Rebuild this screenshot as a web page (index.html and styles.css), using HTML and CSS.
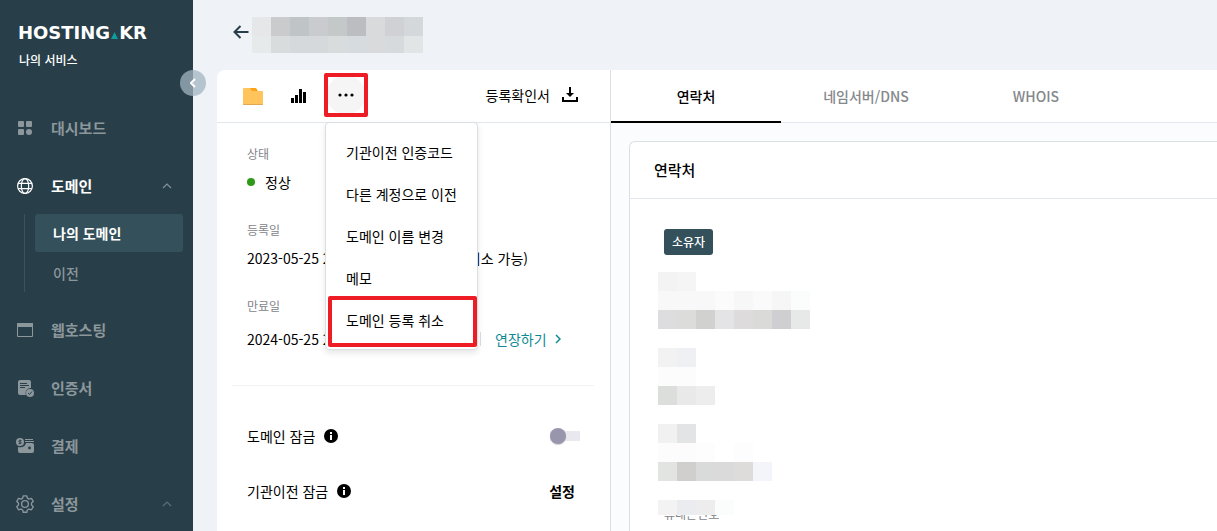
FILE: index.html
```html
<!DOCTYPE html>
<html lang="ko">
<head>
  <meta charset="UTF-8" />
  <meta name="viewport" content="width=device-width, initial-scale=1.0" />
  <title>HOSTING.KR 나의 서비스</title>
  <link rel="stylesheet" href="styles.css">
</head>
<body>
  <div class="app">

    <!-- Sidebar -->
    <aside class="sidebar">
      <a class="logo" href="#">HOSTING<svg class="logo-mark" width="7" height="7" viewBox="0 0 7 7"><path d="M3.5 0L7 7H0z" fill="#0f9c9c"/></svg>KR</a>
      <p class="service">나의 서비스</p>
      <button class="collapse" type="button" aria-label="메뉴 접기">
        <svg width="6" height="10" viewBox="0 0 6 10" fill="none" stroke="#fff" stroke-width="2"><path d="M5 1L1 5l4 4"/></svg>
      </button>

      <nav class="menu">
        <a class="menu-item" href="#">
          <svg width="18" height="18" viewBox="0 0 18 18" fill="currentColor"><rect x="2" y="2" width="6" height="6" rx="1"/><rect x="10" y="2" width="6" height="6" rx="1"/><rect x="2" y="10" width="6" height="6" rx="1"/><circle cx="13" cy="13" r="3"/></svg>
          <span>대시보드</span>
        </a>
        <a class="menu-item current" href="#">
          <svg width="18" height="18" viewBox="0 0 18 18" fill="none" stroke="currentColor" stroke-width="1.2"><circle cx="9" cy="9" r="7.4"/><ellipse cx="9" cy="9" rx="3.7" ry="7.4"/><path d="M2.2 6.3h13.6M2.2 11.7h13.6"/></svg>
          <span>도메인</span>
          <svg class="arrow" width="10" height="6" viewBox="0 0 10 6" fill="none" stroke="currentColor" stroke-width="1.2"><path d="M1 5l4-4 4 4"/></svg>
        </a>
        <div class="submenu">
          <a class="submenu-item selected" href="#">나의 도메인</a>
          <a class="submenu-item" href="#">이전</a>
        </div>
        <a class="menu-item" href="#">
          <svg width="18" height="18" viewBox="0 0 18 18"><path d="M1.5 2.5h15v13h-15z" fill="none" stroke="currentColor"/><path d="M1 2h16v4H1z" fill="currentColor"/></svg>
          <span>웹호스팅</span>
        </a>
        <a class="menu-item" href="#">
          <svg width="18" height="18" viewBox="0 0 18 18"><path d="M4 1h9a2 2 0 0 1 2 2v6a5 5 0 0 0-5 7H4a2 2 0 0 1-2-2V3a2 2 0 0 1 2-2z" fill="currentColor"/><path d="M4 4.5h7M4 6.5h9M4 8.5h5" stroke="#283e48"/><circle cx="14" cy="14" r="4" fill="currentColor"/><path d="M12 14l1.5 1.5 2.5-3" stroke="#283e48" fill="none"/></svg>
          <span>인증서</span>
        </a>
        <a class="menu-item" href="#">
          <svg width="18" height="18" viewBox="0 0 18 18"><path d="M9 4.5h9M9 2.5h8" stroke="currentColor"/><path d="M2 10c4 1 7 0 8-4h6a2 2 0 0 1 2 2v6a2 2 0 0 1-2 2H4a2 2 0 0 1-2-2z" fill="currentColor"/><circle cx="4" cy="5" r="4" fill="currentColor"/><path d="M5.5 3.5h-2a.7.7 0 0 0 0 1.5h1a.7.7 0 0 1 0 1.5h-2M4 2.5v5" stroke="#283e48" fill="none" stroke-width=".8"/><circle cx="13.5" cy="11" r="1.4" fill="#283e48"/></svg>
          <span>결제</span>
        </a>
        <a class="menu-item" href="#">
          <svg width="18" height="18" viewBox="0 0 24 24" fill="none" stroke="currentColor" stroke-width="1.8"><path d="M9.6 1.2h4.8l.7 3 2.3 1.3 3.2-1 2.4 4.2-2.3 2v2.6l2.3 2.2-2.4 4.2-3.2-1-2.3 1.3-.7 3H9.6l-.7-3-2.3-1.3-3.2 1L1 15.500l2.300-2.200v-2.600L1 8.700l2.400-4.200 3.200 1 2.300-1.300z" stroke-linejoin="round"/><circle cx="12" cy="12" r="4.5"/></svg>
          <span>설정</span>
          <svg class="arrow dim" width="10" height="6" viewBox="0 0 10 6" fill="none" stroke="currentColor" stroke-width="1.2"><path d="M1 5l4-4 4 4"/></svg>
        </a>
      </nav>
    </aside>

    <main class="content">
      <!-- Domain title -->
      <header class="title-bar">
        <button class="back" type="button" aria-label="뒤로">
          <svg width="16" height="14" viewBox="0 0 16 14" fill="none" stroke="#283e48" stroke-width="2"><path d="M15.500 7H1.500M7.500 1l-6 6 6 6"/></svg>
        </button>
        <svg class="mosaic" width="171" height="36" viewBox="0 0 171 36" shape-rendering="crispEdges">
          <path fill="#e5e7e9" d="M0 0h19v19H0z"/><path fill="#c9cbcd" d="M19 0h19v19H19z"/><path fill="#bfc4c7" d="M38 0h19v19H38z"/><path fill="#c9cbcf" d="M57 0h19v19H57z"/><path fill="#c4c8c9" d="M76 0h19v19H76z"/><path fill="#bcbdc1" d="M95 0h19v19H95z"/><path fill="#d9dadc" d="M114 0h19v19h-19z"/><path fill="#cfd1d5" d="M133 0h19v19h-19z"/><path fill="#d5d8da" d="M152 0h19v19h-19z"/>
          <path fill="#e6eaeb" d="M0 19h19v17H0z"/><path fill="#d8dcdd" d="M19 19h19v17H19z"/><path fill="#d5d9dc" d="M38 19h38v17H38z"/><path fill="#d8dcdd" d="M76 19h19v17H76z"/><path fill="#d6dbdf" d="M95 19h19v17H95z"/><path fill="#d9dadc" d="M114 19h19v17h-19z"/><path fill="#d6dadd" d="M133 19h19v17h-19z"/><path fill="#e1e5e6" d="M152 19h19v17h-19z"/>
        </svg>
      </header>

      <div class="panels">
        <!-- Domain info -->
        <section class="info">
          <div class="toolbar">
            <button class="tool" type="button" aria-label="폴더">
              <svg width="20" height="18" viewBox="0 0 20 18"><path d="M7 1h6l2 3v2H7z" fill="#ffa21a"/><path d="M0 2a1 1 0 0 1 1-1h6l2 3h10a1 1 0 0 1 1 1v12a1 1 0 0 1-1 1H1a1 1 0 0 1-1-1z" fill="#ffc55c"/><path d="M0 17h20a1 1 0 0 1-1 1H1a1 1 0 0 1-1-1z" fill="#e0a850"/></svg>
            </button>
            <button class="tool" type="button" aria-label="통계">
              <svg width="16" height="14" viewBox="0 0 16 14" shape-rendering="crispEdges"><path d="M0 9h3v5H0zM4 6h3v8H4zM8 0h3v14H8zM12 3h3v11h-3z"/></svg>
            </button>
            <div class="more">
              <button class="more-button" type="button" aria-label="더보기">
                <svg width="16" height="4" viewBox="0 0 16 4"><circle cx="2" cy="2" r="1.6"/><circle cx="8" cy="2" r="1.6"/><circle cx="14" cy="2" r="1.6"/></svg>
              </button>
              <div class="dropdown">
                <button type="button">기관이전 인증코드</button>
                <button type="button">다른 계정으로 이전</button>
                <button type="button">도메인 이름 변경</button>
                <button type="button">메모</button>
                <button class="marked" type="button">도메인 등록 취소</button>
              </div>
            </div>
            <a class="certificate" href="#">등록확인서
              <svg width="16" height="16" viewBox="0 0 16 16"><path d="M7 0h2v6h3l-4 4-4-4h3z"/><path d="M1 10v4h14v-4" fill="none" stroke="#000" stroke-width="2"/></svg>
            </a>
          </div>

          <dl class="details">
            <dt>상태</dt>
            <dd class="status">정상</dd>
            <dt>등록일</dt>
            <dd class="registered"><span>2023-05-25 2</span><span>(취소 가능)</span></dd>
            <dt>만료일</dt>
            <dd class="expires">
              <span class="date">2024-05-25 2</span>
              <a class="extend" href="#">연장하기
                <svg width="6" height="10" viewBox="0 0 6 10" fill="none" stroke="currentColor" stroke-width="1.5"><path d="M1 1l4 4-4 4"/></svg>
              </a>
            </dd>
          </dl>

          <div class="locks">
            <div class="lock">
              <label for="domainLock">도메인 잠금</label>
              <svg class="help" width="14" height="14" viewBox="0 0 14 14"><circle cx="7" cy="7" r="7"/><path d="M6 3h2v2H6zM6 6h2v5H6z" fill="#fff"/></svg>
              <input class="toggle" id="domainLock" type="checkbox">
            </div>
            <div class="lock">
              <span>기관이전 잠금</span>
              <svg class="help" width="14" height="14" viewBox="0 0 14 14"><circle cx="7" cy="7" r="7"/><path d="M6 3h2v2H6zM6 6h2v5H6z" fill="#fff"/></svg>
              <button class="setting" type="button">설정</button>
            </div>
          </div>
        </section>

        <!-- Contacts -->
        <section class="contact">
          <nav class="tabs">
            <a class="tab active" href="#">연락처</a>
            <a class="tab" href="#">네임서버/DNS</a>
            <a class="tab" href="#">WHOIS</a>
          </nav>
          <div class="card">
            <h2>연락처</h2>
            <div class="card-body">
              <span class="badge">소유자</span>
              <div class="person">
                <svg class="mosaic" width="152" height="243" viewBox="0 0 152 243" shape-rendering="crispEdges">
                  <path fill="#f3f3f3" d="M0 0h19v19H0z"/><path fill="#f5f5f5" d="M19 0h19v19H19z"/>
                  <path fill="#f8f8f8" d="M0 19h57v19H0z"/><path fill="#fbfbfb" d="M57 19h19v19H57z"/><path fill="#f7f7f7" d="M76 19h19v19H76z"/><path fill="#fafafa" d="M95 19h19v19H95z"/><path fill="#f6f6f6" d="M114 19h19v19h-19z"/><path fill="#fbfdfc" d="M133 19h19v19h-19z"/>
                  <path fill="#dddde0" d="M0 38h19v19H0z"/><path fill="#dcdcdb" d="M19 38h19v19H19z"/><path fill="#d1d1d0" d="M38 38h19v19H38z"/><path fill="#e4e4e7" d="M57 38h19v19H57z"/><path fill="#dddbdc" d="M76 38h19v19H76z"/><path fill="#dadad8" d="M95 38h19v19H95z"/><path fill="#cfcfd2" d="M114 38h19v19h-19z"/><path fill="#e7e9e8" d="M133 38h19v19h-19z"/>
                  <path fill="#f2f2f2" d="M0 76h19v19H0z"/><path fill="#eff0f3" d="M19 76h19v19H19z"/><path fill="#fcfcfc" d="M0 95h38v19H0z"/>
                  <path fill="#dcdedc" d="M0 114h19v19H0z"/><path fill="#e9e9e9" d="M19 114h19v19H19z"/><path fill="#ededed" d="M38 114h19v19H38z"/>
                  <path fill="#f1f1f1" d="M0 152h19v19H0z"/><path fill="#e3e4e5" d="M19 152h19v19H19z"/><path fill="#fcfcfc" d="M0 171h38v19H0z"/><path fill="#fdfdfd" d="M38 171h19v19H38zM76 171h19v19H76z"/>
                  <path fill="#e1e4e1" d="M0 190h19v19H0z"/><path fill="#d0cfcd" d="M19 190h19v19H19z"/><path fill="#d9dbda" d="M38 190h19v19H38z"/><path fill="#dadada" d="M57 190h19v19H57z"/><path fill="#dddcdb" d="M76 190h19v19H76z"/><path fill="#f4f5fa" d="M95 190h19v19H95z"/>
                  <path fill="#f3f3f3" d="M0 228h19v15H0z"/><path fill="#ebecef" d="M19 228h19v15H19z"/><path fill="#ededee" d="M38 228h19v15H38z"/><path fill="#fbfdfc" d="M57 228h19v15H57z"/>
                </svg>
                <span class="field">휴대폰번호</span>
              </div>
            </div>
          </div>
        </section>
      </div>
    </main>
  </div>
</body>
</html>
```
FILE: styles.css
```css
* {
  margin: 0;
  padding: 0;
  box-sizing: border-box;
}

body {
  font-family: "Noto Sans CJK KR", sans-serif;
  font-size: 14px;
  line-height: 20px;
  color: #000;
  background: #eff3f7;
}

a {
  color: inherit;
  text-decoration: none;
}

button {
  font: inherit;
  color: inherit;
  background: none;
  border: none;
  cursor: pointer;
}

svg {
  display: block;
  flex-shrink: 0;
}

.app {
  display: flex;
  height: 100vh;
  overflow: hidden;
}

/* Sidebar */
.sidebar {
  position: relative;
  flex: 0 0 193px;
  padding-top: 23px;
  background: #283e48;
  color: #fff;
}

.logo {
  display: flex;
  align-items: center;
  padding-left: 18px;
  font-family: "DejaVu Sans", sans-serif;
  font-size: 18px;
  font-weight: bold;
}

.logo-mark {
  margin: 5px 1px 0;
}

.service {
  margin: 7px 0 0 19px;
  font-size: 12px;
  font-weight: 500;
}

.collapse {
  position: absolute;
  top: 70px;
  right: -13px;
  z-index: 1;
  display: flex;
  align-items: center;
  justify-content: center;
  width: 26px;
  height: 26px;
  border-radius: 50%;
  background: rgba(161, 182, 193, 0.75);
}

.menu {
  margin-top: 29px;
}

.menu-item {
  display: flex;
  align-items: center;
  height: 58px;
  padding: 0 21px 0 16px;
  font-size: 15px;
  font-weight: bold;
  color: #8c979c;
}

.menu-item span {
  margin-left: 17px;
}

.menu-item.current {
  color: #fff;
}

.arrow {
  margin-left: auto;
  color: #84939a;
}

.arrow.dim {
  color: #5d6f77;
}

.submenu {
  margin: -1px 10px 9px 24px;
  padding-left: 10px;
  border-left: 1px solid #3d525c;
}

.submenu-item {
  display: block;
  padding: 9px 18px;
  border-radius: 3px;
  font-weight: 500;
  color: #8c979c;
}

.submenu-item + .submenu-item {
  margin-top: 2px;
}

.submenu-item.selected {
  background: #34505b;
  font-weight: bold;
  color: #fff;
}

/* Content */
.content {
  flex: 1;
  display: flex;
  flex-direction: column;
  min-width: 0;
  padding-left: 24px;
}

.title-bar {
  display: flex;
  align-items: center;
  gap: 3px;
  height: 70px;
  flex-shrink: 0;
  padding-left: 16px;
}

.back {
  margin-bottom: 6px;
}

.panels {
  flex: 1;
  display: flex;
  border-top-left-radius: 8px;
  background: #fff;
}

.info {
  flex: 0 0 394px;
  border-right: 1px solid #dcdfe2;
}

.toolbar {
  display: flex;
  align-items: center;
  height: 53px;
  padding: 0 32px 0 26px;
  border-bottom: 1px solid #e1e7ec;
}

.tool + .tool {
  margin-left: 28px;
}

.more {
  position: relative;
  margin: 0 0 2px 17px;
}

.more-button {
  display: flex;
  align-items: center;
  justify-content: center;
  width: 44px;
  height: 44px;
  border: 4px solid #ee1c25;
  border-radius: 2px;
  background: radial-gradient(circle, #f5f5f5 19px, #fff 20px);
}

.dropdown {
  position: absolute;
  top: 49px;
  left: 1px;
  z-index: 1;
  width: 153px;
  padding: 8px 0;
  border: 1px solid #d9e0e4;
  border-radius: 4px;
  background: #fff;
  box-shadow: 0 3px 6px rgba(0, 0, 0, 0.1);
}

.dropdown button {
  display: block;
  width: 100%;
  height: 42px;
  padding-left: 20px;
  text-align: left;
  white-space: nowrap;
}

.dropdown .marked {
  position: relative;
}

.marked::after {
  content: "";
  position: absolute;
  inset: -3px 0 -6px 2px;
  border: 4px solid #ee1c25;
  border-radius: 2px;
}

.certificate {
  display: flex;
  align-items: center;
  gap: 12px;
  margin: 0 0 2px auto;
}

.details {
  margin: 0 16px 0 15px;
  padding: 21px 15px 36px;
  border-bottom: 1px solid #f1f2f3;
}

.details dt {
  font-size: 12px;
  color: #7f848a;
}

.details dd {
  margin: 8px 0 28px;
}

.details .status {
  display: flex;
  align-items: center;
  gap: 10px;
}

.status::before {
  content: "";
  width: 8px;
  height: 8px;
  border-radius: 50%;
  background: #2f9a17;
}

.details .registered {
  display: flex;
  justify-content: space-between;
  margin-right: 51px;
}

.details .expires {
  display: flex;
  align-items: center;
  margin: 13px 0 0;
}

.date {
  width: 233px;
}

.extend {
  display: flex;
  align-items: center;
  gap: 8px;
  height: 14px;
  padding-left: 14px;
  border-left: 1px solid #dcdfe2;
  color: #0f8a94;
}

.locks {
  padding: 22px 30px;
}

.lock {
  display: flex;
  align-items: center;
  height: 55px;
}

.help {
  margin-left: 9px;
}

.toggle {
  appearance: none;
  display: flex;
  align-items: center;
  width: 30px;
  height: 16px;
  margin-left: auto;
  background: linear-gradient(#e9e8ee, #e9e8ee) center / 100% 10px no-repeat;
  border-radius: 5px;
}

.toggle::before {
  content: "";
  width: 16px;
  height: 16px;
  border-radius: 50%;
  background: #9896ad;
  box-shadow: 0 1px 1px rgba(0, 0, 0, 0.2);
}

.setting {
  margin: 0 5px 0 auto;
  font-weight: bold;
}

/* Contact */
.contact {
  flex: 1;
  min-width: 0;
  background: #fbfcfe;
}

.tabs {
  display: flex;
  height: 53px;
  border-bottom: 1px solid #e1e7ec;
  background: #fff;
}

.tab {
  width: 170px;
  height: 53px;
  padding-top: 16px;
  text-align: center;
  font-weight: 500;
  color: #85888c;
}

.tab.active {
  border-bottom: 2px solid #000;
  color: #000;
}

.card {
  margin: 18px 0 0 18px;
  border: 1px solid #dae1e5;
  border-right: none;
  border-top-left-radius: 6px;
  background: #fff;
}

.card h2 {
  padding: 18px 24px;
  border-bottom: 1px solid #e1e7ec;
  font-size: 15px;
  font-weight: 500;
}

.card-body {
  padding: 30px 28px;
}

.badge {
  display: inline-block;
  margin-left: 6px;
  padding: 3px 8px;
  border-radius: 3px;
  background: #34505b;
  font-size: 12px;
  font-weight: 500;
  color: #fff;
}

.person {
  position: relative;
  margin-top: 17px;
}

.field {
  position: absolute;
  top: 232px;
  left: 6px;
  font-size: 12px;
  color: #7f848a;
}

.person .mosaic {
  position: relative;
  z-index: 1;
}
```
